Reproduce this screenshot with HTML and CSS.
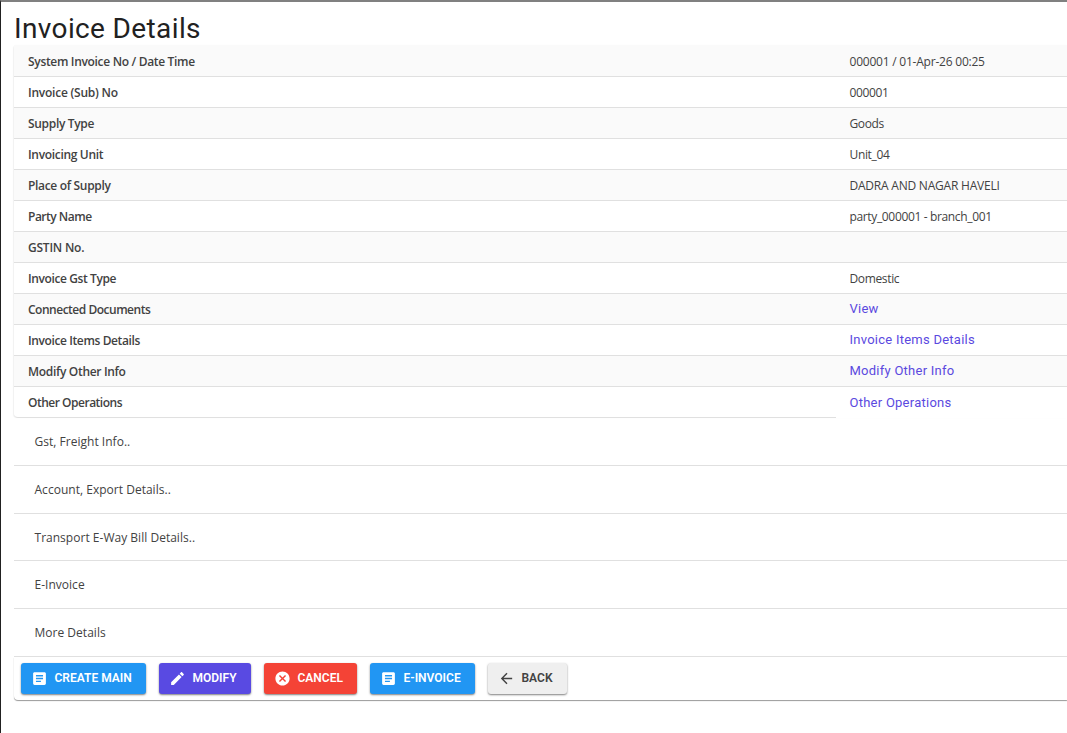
FILE: index.html
```html
<!DOCTYPE html>
<html lang="en">
<head>
<meta charset="utf-8">
<title>Invoice Details</title>
<link rel="stylesheet" href="styles.css">
</head>
<body>
<main class="page">
  <h1 class="title">Invoice Details</h1>
  <section class="details">
    <div class="row"><div class="label">System Invoice No / Date Time</div><div class="value">000001 / 01-Apr-26 00:25</div></div>
    <div class="row"><div class="label loose">Invoice (Sub) No</div><div class="value tight">000001</div></div>
    <div class="row"><div class="label">Supply Type</div><div class="value tight">Goods</div></div>
    <div class="row"><div class="label">Invoicing Unit</div><div class="value tight">Unit_04</div></div>
    <div class="row"><div class="label">Place of Supply</div><div class="value">DADRA AND NAGAR HAVELI</div></div>
    <div class="row"><div class="label tight">Party Name</div><div class="value tight">party_000001 - branch_001</div></div>
    <div class="row"><div class="label loose">GSTIN No.</div><div class="value"></div></div>
    <div class="row"><div class="label snug">Invoice Gst Type</div><div class="value tight">Domestic</div></div>
    <div class="row"><div class="label tight">Connected Documents</div><div class="value"><a class="link">View</a></div></div>
    <div class="row"><div class="label snug">Invoice Items Details</div><div class="value"><a class="link">Invoice Items Details</a></div></div>
    <div class="row"><div class="label">Modify Other Info</div><div class="value"><a class="link">Modify Other Info</a></div></div>
    <div class="row last"><div class="label tight">Other Operations</div><div class="value"><a class="link">Other Operations</a></div></div>
  </section>
  <section class="panels">
    <div class="panel">Gst, Freight Info..</div>
    <div class="panel">Account, Export Details..</div>
    <div class="panel short">Transport E-Way Bill Details..</div>
    <div class="panel">E-Invoice</div>
    <div class="panel">More Details</div>
  </section>
  <footer class="actions">
    <button class="btn blue create"><svg class="icon" viewBox="0 0 24 24"><path d="M19 3H5c-1.100 0-2 .9-2 2v14c0 1.100.9 2 2 2h14c1.100 0 2-.9 2-2V5c0-1.100-.9-2-2-2zm-5 14H7v-2h7v2zm3-4H7v-2h10v2zm0-4H7V7h10v2z"/></svg><span>CREATE MAIN</span></button>
    <button class="btn violet modify"><svg class="icon" viewBox="0 0 24 24"><path d="M3 17.250V21h3.750L17.810 9.940l-3.750-3.750L3 17.250zM20.710 7.040c.39-.39.39-1.020 0-1.410l-2.340-2.340c-.39-.39-1.020-.39-1.410 0l-1.830 1.830 3.750 3.750 1.830-1.830z"/></svg><span>MODIFY</span></button>
    <button class="btn red cancel"><svg class="icon" viewBox="0 0 24 24"><path d="M12 2C6.470 2 2 6.470 2 12s4.470 10 10 10 10-4.470 10-10S17.530 2 12 2zm5 13.590L15.590 17 12 13.410 8.410 17 7 15.590 10.590 12 7 8.410 8.410 7 12 10.590 15.590 7 17 8.410 13.410 12 17 15.590z"/></svg><span>CANCEL</span></button>
    <button class="btn blue einvoice"><svg class="icon" viewBox="0 0 24 24"><path d="M19 3H5c-1.100 0-2 .9-2 2v14c0 1.100.9 2 2 2h14c1.100 0 2-.9 2-2V5c0-1.100-.9-2-2-2zm-5 14H7v-2h7v2zm3-4H7v-2h10v2zm0-4H7V7h10v2z"/></svg><span>E-INVOICE</span></button>
    <button class="btn grey back"><svg class="icon" viewBox="0 0 24 24"><path d="M20 11H7.830l5.590-5.590L12 4l-8 8 8 8 1.410-1.410L7.830 13H20v-2z"/></svg><span>BACK</span></button>
  </footer>
</main>
</body>
</html>
```
FILE: styles.css
```css
* { box-sizing: border-box; }
body {
  margin: 0;
  height: 733px;
  overflow: hidden;
  background: #fff;
  color: #424242;
  font: 12px/18px "Open Sans", "Noto Sans", sans-serif;
}
.page {
  height: 733px;
  border-top: 2px solid #808080;
  border-left: 1px solid #212121;
  padding: 11px 0 0 13px;
}
.title {
  margin: 0;
  height: 32px;
  font: 400 28px/32px Roboto, sans-serif;
  letter-spacing: 0.37px;
  color: #212121;
}
.details {
  border-radius: 4px 0 0 4px;
  box-shadow: -1px 0 1px rgba(0, 0, 0, 0.06);
}
.row {
  display: flex;
  height: 31px;
}
.row:first-child { height: 32px; }
.row:first-child .label { border-top-left-radius: 4px; }
.row:nth-child(odd) { background: #fafafa; }
.label, .value {
  display: flex;
  align-items: center;
  padding-top: 2px;
  border-bottom: 1px solid #e0e0e0;
  white-space: nowrap;
}
.label {
  width: 822px;
  padding-left: 14px;
  font-weight: 600;
  letter-spacing: -0.32px;
}
.label.loose { letter-spacing: -0.23px; }
.label.snug { letter-spacing: -0.39px; }
.label.tight { letter-spacing: -0.49px; }
.value {
  flex: 1;
  padding-left: 13.5px;
  letter-spacing: -0.22px;
}
.value.tight { letter-spacing: -0.35px; }
.last .label { border-bottom-left-radius: 4px; }
.last .value { border-bottom: 0; }
.link {
  padding-bottom: 2px;
  font: 400 13px/18px Roboto, sans-serif;
  letter-spacing: 0.25px;
  color: #5b49df;
}
.last .link { padding-bottom: 1px; }
.panel {
  display: flex;
  align-items: center;
  height: 48px;
  padding-left: 20.5px;
  border-bottom: 1px solid #e0e0e0;
  letter-spacing: 0.02px;
}
.panel.short { height: 47px; padding-top: 1px; }
.actions {
  display: flex;
  gap: 13px;
  height: 43px;
  padding: 6px 0 0 7px;
  border-radius: 0 0 0 4px;
  box-shadow: 0 1px 1px rgba(0, 0, 0, 0.4);
}
.btn {
  display: flex;
  align-items: center;
  gap: 7px;
  height: 31px;
  padding: 0 0 0 10px;
  border: 0;
  border-radius: 3px;
  box-shadow: 0 1px 2px rgba(0, 0, 0, 0.5);
  color: #fff;
  font: 600 12px/18px Roboto, sans-serif;
  white-space: nowrap;
}
.btn span {
  padding-bottom: 2px;
  margin-left: -0.5px;
}
.icon {
  width: 17px;
  height: 17px;
  fill: currentColor;
}
.blue { background: #2196f3; }
.violet { background: #594ae2; }
.red { background: #f44336; }
.grey { background: #efefef; color: #424242; }
.create { width: 125px; }
.modify { width: 92px; }
.cancel { width: 93px; }
.einvoice { width: 105px; }
.back { width: 79px; }
```
